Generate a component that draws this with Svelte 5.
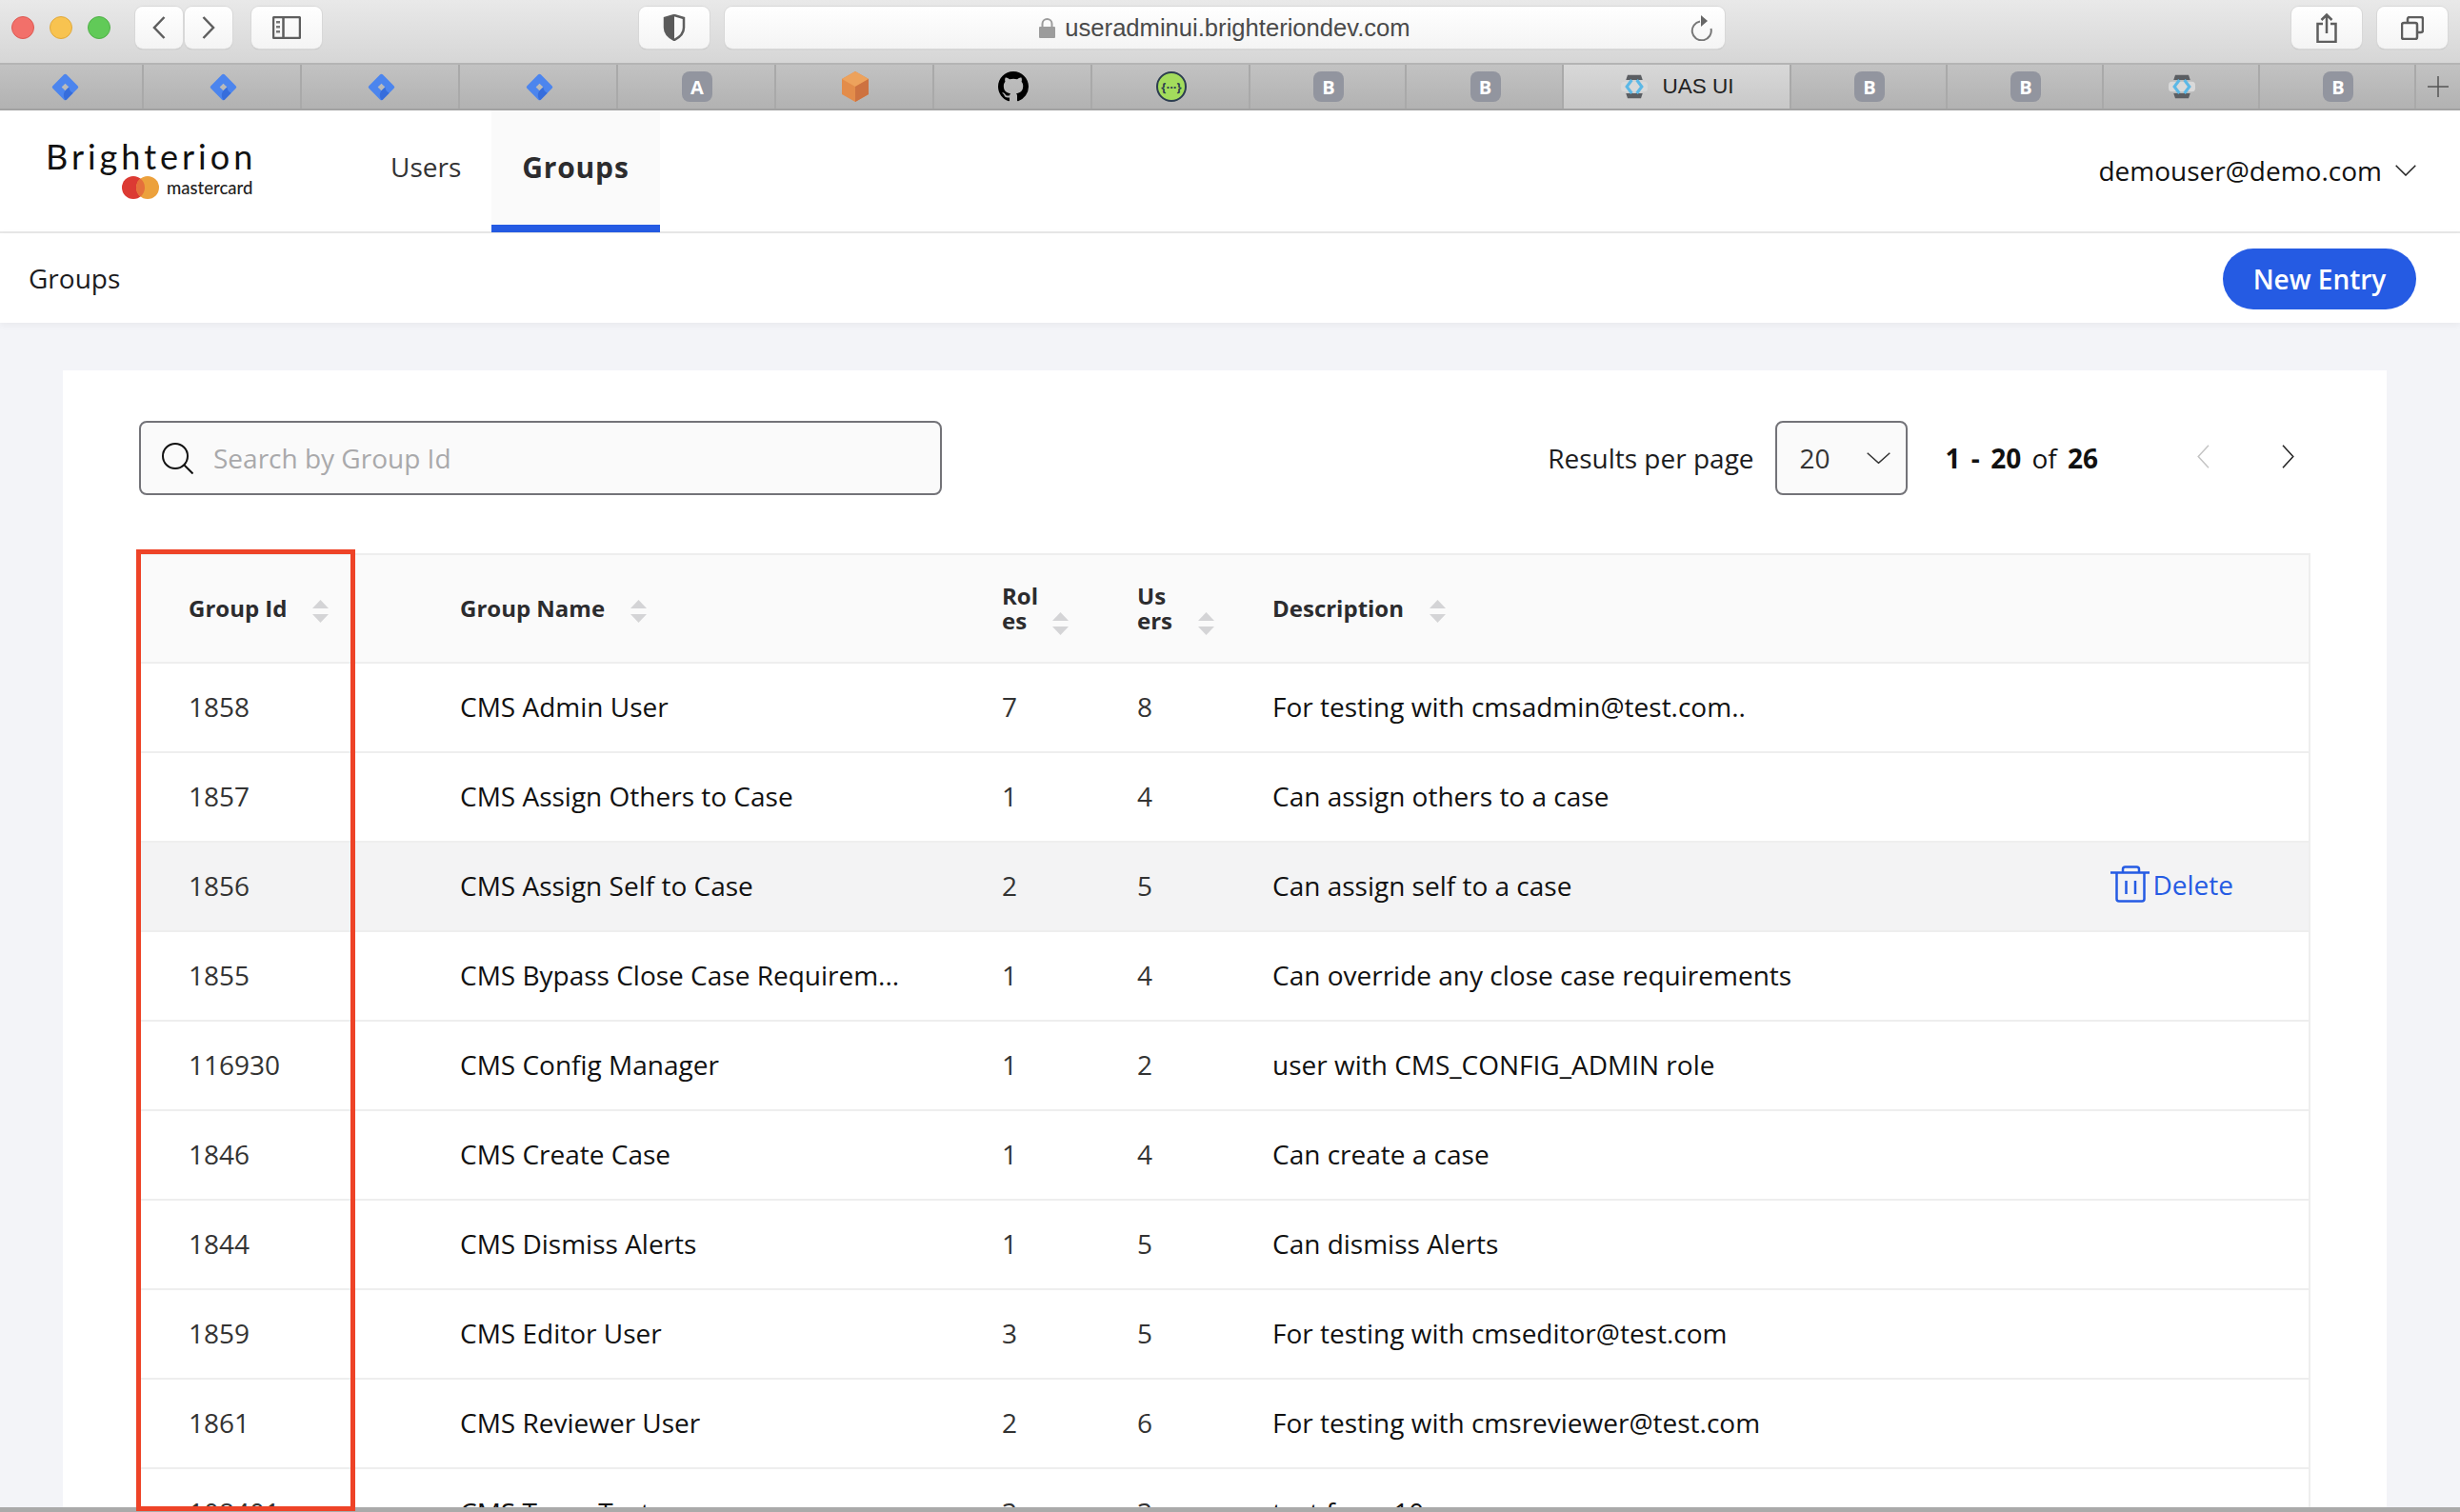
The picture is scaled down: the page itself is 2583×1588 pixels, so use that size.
<script lang="ts">
  const rows = [
    { id: '1858', name: 'CMS Admin User', roles: 7, users: 8, desc: 'For testing with cmsadmin@test.com..' },
    { id: '1857', name: 'CMS Assign Others to Case', roles: 1, users: 4, desc: 'Can assign others to a case' },
    { id: '1856', name: 'CMS Assign Self to Case', roles: 2, users: 5, desc: 'Can assign self to a case', hover: true },
    { id: '1855', name: 'CMS Bypass Close Case Requirem...', roles: 1, users: 4, desc: 'Can override any close case requirements' },
    { id: '116930', name: 'CMS Config Manager', roles: 1, users: 2, desc: 'user with CMS_CONFIG_ADMIN role' },
    { id: '1846', name: 'CMS Create Case', roles: 1, users: 4, desc: 'Can create a case' },
    { id: '1844', name: 'CMS Dismiss Alerts', roles: 1, users: 5, desc: 'Can dismiss Alerts' },
    { id: '1859', name: 'CMS Editor User', roles: 3, users: 5, desc: 'For testing with cmseditor@test.com' },
    { id: '1861', name: 'CMS Reviewer User', roles: 2, users: 6, desc: 'For testing with cmsreviewer@test.com' },
    { id: '108401', name: 'CMS Team Test', roles: 3, users: 3, desc: 'test from 10' },
  ];

  const tabs = ['jira', 'jira', 'jira', 'jira', 'A', 'box', 'github', 'swagger', 'B', 'B', 'active', 'B', 'B', 'uas', 'B'];
  const tabWidths = [151, 166, 166, 166, 166, 166, 166, 166, 164, 165, 239, 164, 164, 164, 164];
</script>

{#snippet sort()}
  <svg class="sort" viewBox="0 0 17 24" aria-hidden="true">
    <path d="M8.5 0 17 9H0z" />
    <path d="M0 15h17l-8.5 9z" />
  </svg>
{/snippet}

{#snippet uasIcon()}
  <svg class="fav uas" viewBox="0 0 32 32" aria-hidden="true">
    <rect x="0" y="10" width="32" height="12" rx="4" fill="#d9d9d9" />
    <path d="M8 2h16l2 6H6zM6 24h20l-2 6H8z" fill="#5b5e62" />
    <path d="M13 8 7 16l6 8M19 8l6 8-6 8" fill="none" stroke="#5cb8e6" stroke-width="3.5" />
  </svg>
{/snippet}

<div class="window">
  <div class="toolbar">
    <div class="lights">
      <span class="light red"></span>
      <span class="light yellow"></span>
      <span class="light green"></span>
    </div>
    <button class="tb back" aria-label="Back">
      <svg width="14" height="24" viewBox="0 0 14 24"><path d="M12.5 1 2 12l10.5 11" class="line" /></svg>
    </button>
    <button class="tb forward" aria-label="Forward">
      <svg width="14" height="24" viewBox="0 0 14 24"><path d="M1.5 1 12 12 1.5 23" class="line" /></svg>
    </button>
    <button class="tb sidebar" aria-label="Sidebar">
      <svg width="30" height="24" viewBox="0 0 30 24">
        <rect x="1" y="1" width="28" height="22" rx="1.5" class="line" />
        <path d="M11.5 1v22" class="line" />
        <path d="M4 5h4v2.5H4zM4 10h4v2.5H4zM4 15h4v2.5H4z" fill="#777" />
      </svg>
    </button>
    <button class="tb shield" aria-label="Privacy report">
      <svg width="24" height="28" viewBox="0 0 24 28">
        <path d="M12 1 2 4v10c0 6 4 10 10 13 6-3 10-7 10-13V4z" class="line" />
        <path d="M12 1 2 4v10c0 6 4 10 10 13z" fill="#5a5a5a" />
      </svg>
    </button>
    <div class="urlbar">
      <span></span>
      <div class="url">
        <svg width="17" height="21" viewBox="0 0 17 21">
          <path d="M3.5 9V6a5 5 0 0 1 10 0v3" fill="none" stroke="#9c9c9c" stroke-width="2" />
          <rect y="9" width="17" height="12" rx="1" fill="#9c9c9c" />
        </svg>
        <span>useradminui.brighteriondev.com</span>
      </div>
      <svg class="reload" width="23" height="27" viewBox="0 0 23 27">
        <path d="M10 6.5A10 10 0 1 0 21.5 14" fill="none" stroke="#777" stroke-width="2" />
        <path d="M11 0v12l7-6z" fill="#666" />
      </svg>
    </div>
    <button class="tb share" aria-label="Share">
      <svg width="22" height="31" viewBox="0 0 22 31">
        <path d="M7 11H1.5v19h19V11H15M11 21V1.5M5.5 7 11 1.5 16.5 7" class="line" />
      </svg>
    </button>
    <button class="tb copy" aria-label="Tabs">
      <svg width="24" height="25" viewBox="0 0 24 25">
        <rect x="1" y="7" width="16" height="17" rx="2" class="line" />
        <path d="M7 7V3a2 2 0 0 1 2-2h12a2 2 0 0 1 2 2v12a2 2 0 0 1-2 2h-4" class="line" />
      </svg>
    </button>
  </div>

  <div class="tabbar">
    {#each tabs as tab, i}
      <div class="tab" class:active={tab === 'active'} class:first={i === 0} style="width: {tabWidths[i]}px">
        {#if tab === 'jira'}
          <svg class="fav jira" viewBox="0 0 30 30" aria-hidden="true">
            <path fill-rule="evenodd" fill="#4c85ee" d="M13.6 1.4a2 2 0 0 1 2.8 0l12.2 12.2a2 2 0 0 1 0 2.8L16.4 28.600a2 2 0 0 1-2.800 0L1.400 16.400a2 2 0 0 1 0-2.800zM15 11l-4 4 4 4 4-4z" />
            <path fill="#2f66d6" d="M19 15c.5 3 1.500 5 4.500 6.500L16.400 28.600a2 2 0 0 1-1.400.400c-2-3-2.500-6.500 0-10z" opacity=".75" />
          </svg>
        {:else if tab === 'A' || tab === 'B'}
          <span class="letter">{tab}</span>
        {:else if tab === 'box'}
          <svg class="fav" viewBox="0 0 32 32" aria-hidden="true">
            <path d="M16 0 30 8v16l-14 8-14-8V8z" fill="#e38c4a" />
            <path d="M16 0 30 8 16 16 2 8z" fill="#eda25c" />
            <path d="M16 16 30 8v16l-14 8z" fill="#cd7240" />
          </svg>
        {:else if tab === 'github'}
          <svg class="fav" viewBox="0 0 16 16" aria-hidden="true">
            <path d="M8 0C3.58 0 0 3.58 0 8c0 3.54 2.29 6.53 5.47 7.59.4.07.55-.17.55-.38 0-.19-.01-.82-.01-1.490-2.010.370-2.530-.490-2.690-.940-.090-.230-.480-.940-.820-1.130-.280-.150-.680-.520-.010-.530.630-.010 1.080.580 1.230.820.720 1.210 1.870.870 2.330.660.070-.520.280-.870.510-1.070-1.780-.200-3.640-.890-3.640-3.950 0-.870.310-1.590.820-2.150-.080-.200-.360-1.020.080-2.120 0 0 .670-.210 2.200.820.640-.180 1.320-.270 2-.270.680 0 1.360.090 2 .270 1.530-1.040 2.200-.820 2.200-.820.440 1.100.160 1.920.080 2.120.510.560.820 1.270.820 2.150 0 3.070-1.870 3.750-3.650 3.950.290.250.540.730.540 1.480 0 1.070-.010 1.930-.010 2.200 0 .210.150.460.550.380A8.013 8.013 0 0 0 16 8c0-4.420-3.580-8-8-8z" fill="#000" />
          </svg>
        {:else if tab === 'swagger'}
          <svg class="fav" viewBox="0 0 32 32" aria-hidden="true">
            <circle cx="16" cy="16" r="15" fill="#a3dc5c" stroke="#2c3d50" stroke-width="2" />
            <text x="16" y="21" text-anchor="middle" class="swag">&#123;···&#125;</text>
          </svg>
        {:else if tab === 'uas'}
          {@render uasIcon()}
        {:else}
          {@render uasIcon()}
          <span class="tab-title">UAS UI</span>
        {/if}
      </div>
    {/each}
    <div class="tab plus" aria-label="New tab">
      <svg width="22" height="22" viewBox="0 0 22 22"><path d="M11 0v22M0 11h22" stroke="#555" stroke-width="1.500" /></svg>
    </div>
  </div>

  <header class="topnav">
    <div class="logo">
      <div class="wordmark">Brighterion</div>
      <div class="mc">
        <svg width="39" height="24" viewBox="0 0 39 24" aria-hidden="true">
          <circle cx="12" cy="12" r="12" fill="#dc3a33" />
          <circle cx="27" cy="12" r="12" fill="#eca13c" />
          <path d="M19.500 2.600a12 12 0 0 1 0 18.800 12 12 0 0 1 0-18.800z" fill="#e5703b" />
        </svg>
        <span>mastercard</span>
      </div>
    </div>
    <nav>
      <a href="#users">Users</a>
      <a href="#groups" class="current">Groups</a>
    </nav>
    <div class="account">
      <span>demouser@demo.com</span>
      <svg width="22" height="12" viewBox="0 0 22 12"><path d="m.7.7 10.300 10.300L21.300.7" fill="none" stroke="#222" stroke-width="1.500" /></svg>
    </div>
  </header>

  <div class="subhead">
    <span>Groups</span>
    <button class="new-entry">New Entry</button>
  </div>

  <main>
    <section class="card">
      <div class="controls">
        <div class="search">
          <svg width="33" height="33" viewBox="0 0 33 33" aria-hidden="true">
            <circle cx="14" cy="14" r="13" fill="none" stroke="#111" stroke-width="2" />
            <path d="m23.500 23.500 9 9" stroke="#111" stroke-width="2" />
          </svg>
          <span>Search by Group Id</span>
        </div>
        <div class="paging">
          <span class="per-page">Results per page</span>
          <div class="select">
            <span>20</span>
            <svg width="25" height="12" viewBox="0 0 25 12"><path d="m.7.7 11.800 10.600L24.300.7" fill="none" stroke="#333" stroke-width="1.500" /></svg>
          </div>
          <span class="count"><b>1 - 20</b> of <b>26</b></span>
          <svg class="prev" width="13" height="25" viewBox="0 0 13 25"><path d="M12 .7 1.200 12.500 12 24.300" fill="none" stroke="#c4c4c4" stroke-width="1.500" /></svg>
          <svg class="next" width="13" height="25" viewBox="0 0 13 25"><path d="m1 .7 10.800 11.800L1 24.300" fill="none" stroke="#222" stroke-width="1.500" /></svg>
        </div>
      </div>

      <table>
        <colgroup>
          <col style="width: 285px" />
          <col style="width: 569px" />
          <col style="width: 142px" />
          <col style="width: 142px" />
          <col />
          <col style="width: 300px" />
        </colgroup>
        <thead>
          <tr>
            <th>Group Id{@render sort()}</th>
            <th>Group Name{@render sort()}</th>
            <th>Rol<br />es{@render sort()}</th>
            <th>Us<br />ers{@render sort()}</th>
            <th colspan="2">Description{@render sort()}</th>
          </tr>
        </thead>
        <tbody>
          {#each rows as row}
            <tr class:hover={row.hover}>
              <td class="num">{row.id}</td>
              <td>{row.name}</td>
              <td class="num">{row.roles}</td>
              <td class="num">{row.users}</td>
              <td>{row.desc}</td>
              <td class="actions">
                {#if row.hover}
                  <a href="#delete" class="delete">
                    <svg width="41" height="39" viewBox="0 0 41 39" aria-hidden="true">
                      <path d="M0 7.500h41M6.500 7.500V35a2.500 2.500 0 0 0 2.500 2.500h24a2.500 2.500 0 0 0 2.500-2.500V7.500M13 7V4a2.500 2.500 0 0 1 2.500-2.500h12A2.500 2.500 0 0 1 30 4v3M16.500 16v14M26 16v14" fill="none" stroke="#255be3" stroke-width="2.500" />
                    </svg>
                    Delete
                  </a>
                {/if}
              </td>
            </tr>
          {/each}
        </tbody>
      </table>
    </section>
  </main>

  <div class="red-box"></div>
  <div class="window-edge"></div>
</div>

<style>
  :global(body) {
    margin: 0;
    background: #fff;
  }

  .window {
    position: relative;
    width: 2583px;
    height: 1588px;
    overflow: hidden;
    font-family: 'Open Sans', sans-serif;
    font-size: 28px;
    color: #1c1c1e;
  }

  /* browser chrome */
  .toolbar {
    display: flex;
    align-items: flex-start;
    box-sizing: border-box;
    height: 66px;
    padding-top: 7px;
    background: linear-gradient(#e9e9e9, #d6d6d6);
  }

  .lights {
    display: flex;
    gap: 16px;
    margin: 10px 0 0 12px;
  }

  .light {
    width: 24px;
    height: 24px;
    border-radius: 50%;
    box-sizing: border-box;
  }

  .red { background: #f2706a; border: 1px solid #dd5a53; }
  .yellow { background: #f8c350; border: 1px solid #e0a93c; }
  .green { background: #61ca58; border: 1px solid #50b048; }

  .tb,
  .urlbar {
    box-sizing: border-box;
    height: 44px;
    background: linear-gradient(#fff, #f4f4f4);
    border: 0;
    border-radius: 8px;
    box-shadow: 0 0 0 1px #d8d8d8, 0 1px 1px rgba(0, 0, 0, 0.2);
  }

  .tb {
    display: flex;
    align-items: center;
    justify-content: center;
    padding: 0;
    flex: none;
  }

  .line {
    fill: none;
    stroke: #5e5e5e;
    stroke-width: 2.5;
  }

  .back { width: 50px; margin-left: 26px; }
  .forward { width: 50px; margin-left: 2px; }
  .sidebar { width: 74px; margin-left: 20px; }
  .shield { width: 74px; margin-left: 333px; }
  .share { width: 74px; margin-left: 595px; }
  .copy { width: 74px; margin-left: 16px; }

  .urlbar {
    display: grid;
    grid-template-columns: 1fr auto 1fr;
    align-items: center;
    width: 1050px;
    margin-left: 16px;
  }

  .url {
    display: flex;
    align-items: center;
    gap: 10px;
    font-family: 'Liberation Sans', Arial, sans-serif;
    font-size: 25.6px;
    color: #4a4a4a;
  }

  .reload {
    justify-self: end;
    margin-right: 13px;
  }

  .tabbar {
    display: flex;
    box-sizing: border-box;
    height: 50px;
    background: linear-gradient(#c2c2c2, #b2b2b2);
    border-top: 2px solid #b4b4b4;
    border-bottom: 2px solid #a2a2a2;
  }

  .tab {
    display: flex;
    align-items: center;
    justify-content: center;
    gap: 15px;
    flex: none;
    box-sizing: border-box;
    padding-left: 2px;
    border-right: 2px solid #a9a9a9;
  }

  .tab.first {
    padding-right: 15px;
  }

  .tab.active {
    background: linear-gradient(#d8d8d8, #c8c8c8);
  }

  .tab.plus {
    flex: 1;
    border-right: 0;
    padding-left: 0;
  }

  .tab-title {
    font-family: 'Liberation Sans', Arial, sans-serif;
    font-size: 22.5px;
    color: #222;
  }

  .fav {
    width: 32px;
    height: 32px;
    flex: none;
  }

  .fav.jira {
    width: 29px;
    height: 29px;
  }

  .fav.uas {
    width: 28px;
    height: 28px;
  }

  .swag {
    font: 700 13px 'Open Sans', sans-serif;
    fill: #2c3d50;
  }

  .letter {
    display: flex;
    align-items: center;
    justify-content: center;
    width: 32px;
    height: 32px;
    border-radius: 8px;
    background: #92959f;
    color: #fff;
    font-size: 20px;
    font-weight: 700;
  }

  /* app header */
  .topnav {
    display: flex;
    box-sizing: border-box;
    height: 129px;
    background: #fff;
    border-bottom: 2px solid #e8e8e8;
  }

  .logo {
    width: 378px;
    padding: 28px 0 0 48px;
    box-sizing: border-box;
    flex: none;
  }

  .wordmark {
    font-family: 'Lato', sans-serif;
    font-size: 36px;
    line-height: 40px;
    letter-spacing: 4px;
    color: #111;
  }

  .mc {
    display: flex;
    align-items: center;
    gap: 8px;
    margin: 1px 0 0 80px;
    font-family: 'Lato', sans-serif;
    font-size: 18.5px;
    font-weight: 500;
    color: #222;
  }

  nav {
    display: flex;
  }

  nav a {
    display: flex;
    align-items: center;
    box-sizing: border-box;
    height: 128px;
    padding: 0 32px 10px;
    color: #333;
    text-decoration: none;
  }

  nav a.current {
    background: #fafafa;
    border-bottom: 8px solid #255be3;
    padding-bottom: 2px;
    font-size: 30px;
    font-weight: 700;
    letter-spacing: 0.8px;
    color: #2c2c2e;
  }

  .account {
    display: flex;
    align-items: center;
    gap: 14px;
    margin-left: auto;
    padding: 0 46px 2px 0;
    color: #111;
  }

  .subhead {
    position: relative;
    display: flex;
    align-items: center;
    justify-content: space-between;
    box-sizing: border-box;
    height: 94px;
    padding: 0 46px 0 30px;
    background: #fff;
    box-shadow: 0 2px 8px rgba(0, 0, 0, 0.05);
  }

  .new-entry {
    width: 203px;
    height: 64px;
    margin-top: 2px;
    border: 0;
    border-radius: 32px;
    background: #255be3;
    color: #fff;
    font: 600 28px 'Open Sans', sans-serif;
  }

  main {
    padding: 50px 77px 0 66px;
    background: #f3f4f8;
    height: 1200px;
  }

  .card {
    background: #fff;
    padding: 53px 80px 0;
    height: 1150px;
  }

  .controls {
    display: flex;
    justify-content: space-between;
    align-items: center;
    height: 78px;
    margin-bottom: 61px;
  }

  .search {
    display: flex;
    align-items: center;
    gap: 21px;
    box-sizing: border-box;
    width: 843px;
    height: 78px;
    padding-left: 22px;
    background: #fafafa;
    border: 2px solid #737378;
    border-radius: 8px;
    color: #a9a9ab;
  }

  .paging {
    display: flex;
    align-items: center;
    padding-right: 17px;
  }

  .select {
    display: flex;
    align-items: center;
    justify-content: space-between;
    box-sizing: border-box;
    width: 139px;
    height: 78px;
    margin-left: 22px;
    padding: 0 16px 0 24px;
    background: #fafafa;
    border: 2px solid #737378;
    border-radius: 8px;
    color: #333;
  }

  .count {
    margin-left: 40px;
    color: #111;
    word-spacing: 4px;
  }

  .count b {
    font-weight: 700;
  }

  .prev {
    margin: 0 0 3px 104px;
  }

  .next {
    margin: 0 0 3px 76px;
  }

  table {
    width: 2280px;
    table-layout: fixed;
    border-collapse: separate;
    border-spacing: 0;
    border-right: 2px solid #eee;
  }

  th {
    box-sizing: border-box;
    height: 116px;
    padding: 1px 0 0 52px;
    text-align: left;
    font-size: 24px;
    font-weight: 700;
    line-height: 26px;
    color: #2c2c2e;
    background: #fafafa;
    border-top: 2px solid #eee;
    border-bottom: 2px solid #eee;
  }

  td {
    box-sizing: border-box;
    height: 94px;
    padding: 0 0 2px 52px;
    border-bottom: 2px solid #eee;
    color: #111;
    white-space: nowrap;
  }

  td.num {
    color: #333;
  }

  tr.hover td {
    background: #f3f3f4;
  }

  td.actions {
    text-align: right;
    padding: 3px 79px 0 0;
  }

  .sort {
    display: inline-block;
    width: 17px;
    height: 24px;
    margin-left: 27px;
    vertical-align: -6px;
    fill: #d4d4d6;
  }

  .delete {
    display: inline-flex;
    align-items: center;
    gap: 3px;
    color: #255be3;
    text-decoration: none;
  }

  /* annotation drawn over the screenshot */
  .red-box {
    position: absolute;
    left: 143px;
    top: 577px;
    width: 230px;
    height: 1010px;
    box-sizing: border-box;
    border: 5px solid #ee4327;
    z-index: 2;
  }

  .window-edge {
    position: absolute;
    left: 0;
    right: 0;
    bottom: 0;
    height: 5px;
    background: #aaa;
    z-index: 1;
  }
</style>
